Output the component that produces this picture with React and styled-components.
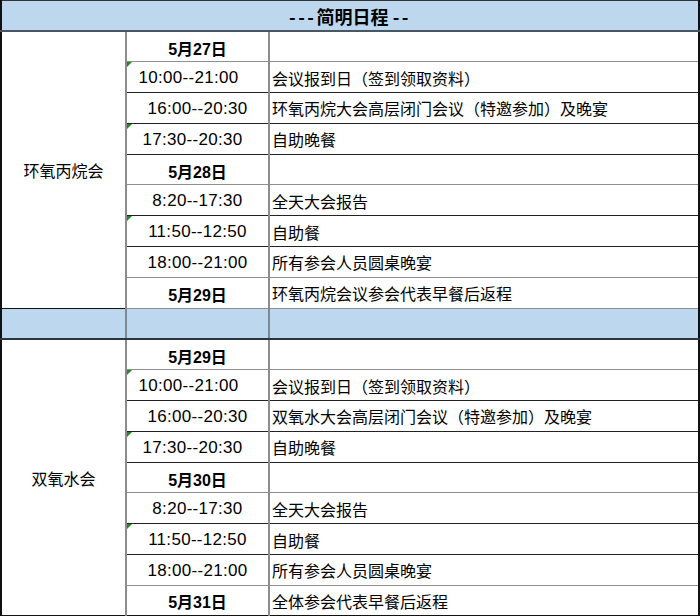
import React from 'react';
import styled, { createGlobalStyle } from 'styled-components';

const GlobalStyle = createGlobalStyle`
  html, body {
    margin: 0;
    padding: 0;
    background: #ffffff;
  }
  body {
    font-family: "Liberation Sans", "Noto Sans CJK SC", sans-serif;
    color: #000000;
  }
`;

const Sheet = styled.table`
  width: 700px;
  height: 616px;
  border-collapse: collapse;
  table-layout: fixed;
  border-left: 2px solid #111;
  border-right: 2px solid #111;
  border-bottom: 2px solid #111;
`;

const TitleCell = styled.th`
  height: 29px;
  padding: 0;
  background: #bdd7ee;
  border-top: 1px solid #333;
  border-bottom: 2px solid #4a5662;
  font-family: "Noto Sans CJK SC", "Liberation Sans", sans-serif;
  font-size: 18px;
  font-weight: 700;
  text-align: center;
  vertical-align: middle;
`;

const Dash = styled.span`
  letter-spacing: 2.5px;
`;

const Row = styled.tr`
  height: 30.8px;
`;

const GroupCell = styled.td`
  padding: 0;
  border-right: 2px solid #8c8c8c;
  border-bottom: 1px solid #111;
  font-family: "Noto Sans CJK SC", sans-serif;
  font-size: 16px;
  text-align: center;
  vertical-align: middle;
  background: #ffffff;
`;

const TimeCell = styled.td`
  position: relative;
  padding: 2px ${p => p.$shift || 0}px 0 0;
  border-top: 1px solid ${p => (p.$line === 'grey' ? '#8f8f8f' : '#222')};
  border-right: 2px solid #8c8c8c;
  font-family: ${p => (p.$bold ? '"Liberation Sans", "Noto Sans CJK SC", sans-serif' : '"Liberation Sans", sans-serif')};
  font-size: ${p => (p.$bold ? 16 : 17)}px;
  font-weight: ${p => (p.$bold ? 700 : 400)};
  letter-spacing: ${p => (p.$bold ? 0 : 0.3)}px;
  text-align: center;
  vertical-align: middle;
  white-space: nowrap;
`;

const TextCell = styled.td`
  padding: 1px 0 0 2px;
  border-top: 1px solid ${p => (p.$line === 'grey' ? '#8f8f8f' : '#222')};
  font-family: "Noto Sans CJK SC", sans-serif;
  font-size: 16px;
  text-align: left;
  vertical-align: middle;
  white-space: nowrap;
`;

const SpacerCell = styled.td`
  padding: 0;
  background: #bdd7ee;
  border-top: 1px solid #8f8f8f;
  border-bottom: 2px solid #2b3540;
  border-right: ${p => (p.$last ? 'none' : '2px solid #7d8894')};
`;

const Flag = styled.span`
  position: absolute;
  top: 0;
  left: 0;
  width: 0;
  height: 0;
  border-top: 5px solid #1f8a1f;
  border-right: 5px solid transparent;
`;

const dayOne = [
  { time: '5月27日', text: '', bold: true, line: 'dark' },
  { time: '10:00--21:00', text: '会议报到日（签到领取资料）', flag: true, shift: 18, line: 'grey' },
  { time: '16:00--20:30', text: '环氧丙烷大会高层闭门会议（特邀参加）及晚宴', line: 'dark' },
  { time: '17:30--20:30', text: '自助晚餐', flag: true, shift: 10, line: 'dark' },
  { time: '5月28日', text: '', bold: true, line: 'dark' },
  { time: '8:20--17:30', text: '全天大会报告', line: 'grey' },
  { time: '11:50--12:50', text: '自助餐', flag: true, line: 'dark' },
  { time: '18:00--21:00', text: '所有参会人员圆桌晚宴', line: 'dark' },
  { time: '5月29日', text: '环氧丙烷会议参会代表早餐后返程', bold: true, line: 'grey' },
];

const dayTwo = [
  { time: '5月29日', text: '', bold: true, line: 'dark' },
  { time: '10:00--21:00', text: '会议报到日（签到领取资料）', flag: true, shift: 18, line: 'grey' },
  { time: '16:00--20:30', text: '双氧水大会高层闭门会议（特邀参加）及晚宴', line: 'dark' },
  { time: '17:30--20:30', text: '自助晚餐', flag: true, shift: 10, line: 'dark' },
  { time: '5月30日', text: '', bold: true, line: 'dark' },
  { time: '8:20--17:30', text: '全天大会报告', line: 'grey' },
  { time: '11:50--12:50', text: '自助餐', flag: true, line: 'dark' },
  { time: '18:00--21:00', text: '所有参会人员圆桌晚宴', line: 'dark' },
  { time: '5月31日', text: '全体参会代表早餐后返程', bold: true, line: 'grey' },
];

function Section({ name, items }) {
  return items.map((item, i) => (
    <Row key={name + i}>
      {i === 0 && <GroupCell rowSpan={items.length}>{name}</GroupCell>}
      <TimeCell $bold={item.bold} $shift={item.shift} $line={i === 0 ? 'none' : item.line}>
        {item.flag && <Flag />}
        {item.time}
      </TimeCell>
      <TextCell $line={i === 0 ? 'none' : item.line}>{item.text}</TextCell>
    </Row>
  ));
}

export default function App() {
  return (
    <>
      <GlobalStyle />
      <Sheet>
        <colgroup>
          <col style={{ width: 125 }} />
          <col style={{ width: 143 }} />
          <col />
        </colgroup>
        <thead>
          <tr>
            <TitleCell colSpan={3}>
              <Dash>---</Dash>简明日程 <Dash>--</Dash>
            </TitleCell>
          </tr>
        </thead>
        <tbody>
          <Section name="环氧丙烷会" items={dayOne} />
          <Row>
            <SpacerCell />
            <SpacerCell />
            <SpacerCell $last />
          </Row>
          <Section name="双氧水会" items={dayTwo} />
        </tbody>
      </Sheet>
    </>
  );
}
